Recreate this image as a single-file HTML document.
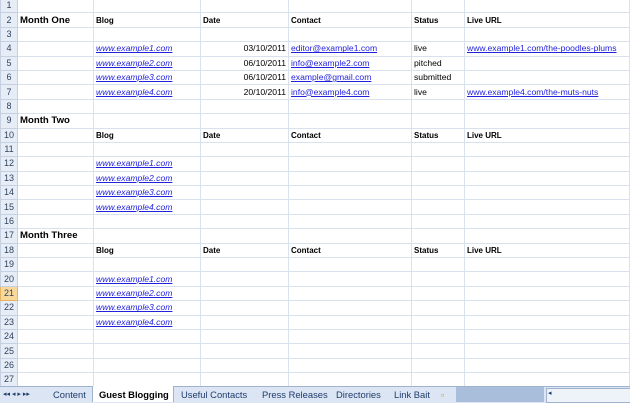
<!DOCTYPE html>
<html><head><style>
body{margin:0;width:630px;height:402px;overflow:hidden;background:#fff;font-family:"Liberation Sans",sans-serif;position:relative}
table{position:absolute;top:-2px;left:0;border-collapse:collapse;table-layout:fixed;width:630px}
td{height:13.4px;border:1px solid #dae1ee;padding:0 2px;font-size:8.6px;white-space:nowrap;overflow:hidden;line-height:13px;color:#000}
td.h{background:#e6edf7;color:#30445e;text-align:center;border-color:#c5d0e0;font-size:9px;padding:0}
td.sel{background:#f9d99b;border-color:#e9b35f}
.b{font-weight:bold;font-size:8px}
.m{font-weight:bold;font-size:9.6px}
.l{color:#2222dd;text-decoration:underline;font-style:italic}
.u{color:#2222dd;text-decoration:underline}
.r{text-align:right}
#tabs{position:absolute;left:0;top:386px;width:630px;height:16px;background:#dbe5f3;border-top:1px solid #9fb3cf;font-size:9.4px;color:#203c6c}
#tabs span{position:absolute;top:2px}
</style></head><body>
<table>
<colgroup><col style="width:17px"><col style="width:76px"><col style="width:107px"><col style="width:88px"><col style="width:123px"><col style="width:53px"><col></colgroup>
<tr><td class="h">1</td><td></td><td></td><td></td><td></td><td></td><td></td></tr>
<tr><td class="h">2</td><td class="m">Month One</td><td class="b">Blog</td><td class="b">Date</td><td class="b">Contact</td><td class="b">Status</td><td class="b">Live URL</td></tr>
<tr><td class="h">3</td><td></td><td></td><td></td><td></td><td></td><td></td></tr>
<tr><td class="h">4</td><td></td><td class="l">www.example1.com</td><td class="r">03/10/2011</td><td class="u">editor@example1.com</td><td>live</td><td class="u">www.example1.com/the-poodles-plums</td></tr>
<tr><td class="h">5</td><td></td><td class="l">www.example2.com</td><td class="r">06/10/2011</td><td class="u">info@example2.com</td><td>pitched</td><td></td></tr>
<tr><td class="h">6</td><td></td><td class="l">www.example3.com</td><td class="r">06/10/2011</td><td class="u">example@gmail.com</td><td>submitted</td><td></td></tr>
<tr><td class="h">7</td><td></td><td class="l">www.example4.com</td><td class="r">20/10/2011</td><td class="u">info@example4.com</td><td>live</td><td class="u">www.example4.com/the-muts-nuts</td></tr>
<tr><td class="h">8</td><td></td><td></td><td></td><td></td><td></td><td></td></tr>
<tr><td class="h">9</td><td class="m">Month Two</td><td></td><td></td><td></td><td></td><td></td></tr>
<tr><td class="h">10</td><td></td><td class="b">Blog</td><td class="b">Date</td><td class="b">Contact</td><td class="b">Status</td><td class="b">Live URL</td></tr>
<tr><td class="h">11</td><td></td><td></td><td></td><td></td><td></td><td></td></tr>
<tr><td class="h">12</td><td></td><td class="l">www.example1.com</td><td></td><td></td><td></td><td></td></tr>
<tr><td class="h">13</td><td></td><td class="l">www.example2.com</td><td></td><td></td><td></td><td></td></tr>
<tr><td class="h">14</td><td></td><td class="l">www.example3.com</td><td></td><td></td><td></td><td></td></tr>
<tr><td class="h">15</td><td></td><td class="l">www.example4.com</td><td></td><td></td><td></td><td></td></tr>
<tr><td class="h">16</td><td></td><td></td><td></td><td></td><td></td><td></td></tr>
<tr><td class="h">17</td><td class="m">Month Three</td><td></td><td></td><td></td><td></td><td></td></tr>
<tr><td class="h">18</td><td></td><td class="b">Blog</td><td class="b">Date</td><td class="b">Contact</td><td class="b">Status</td><td class="b">Live URL</td></tr>
<tr><td class="h">19</td><td></td><td></td><td></td><td></td><td></td><td></td></tr>
<tr><td class="h">20</td><td></td><td class="l">www.example1.com</td><td></td><td></td><td></td><td></td></tr>
<tr><td class="h sel">21</td><td></td><td class="l">www.example2.com</td><td></td><td></td><td></td><td></td></tr>
<tr><td class="h">22</td><td></td><td class="l">www.example3.com</td><td></td><td></td><td></td><td></td></tr>
<tr><td class="h">23</td><td></td><td class="l">www.example4.com</td><td></td><td></td><td></td><td></td></tr>
<tr><td class="h">24</td><td></td><td></td><td></td><td></td><td></td><td></td></tr>
<tr><td class="h">25</td><td></td><td></td><td></td><td></td><td></td><td></td></tr>
<tr><td class="h">26</td><td></td><td></td><td></td><td></td><td></td><td></td></tr>
<tr><td class="h">27</td><td></td><td></td><td></td><td></td><td></td><td></td></tr>
<tr><td class="h">28</td><td></td><td></td><td></td><td></td><td></td><td></td></tr>
</table>
<div id="tabs">
<span style="left:3px;font-size:7px;top:3px">◂◂ ◂ ▸ ▸▸</span>
<div style="position:absolute;left:45px;top:0;width:108px;height:15px;border-right:1px solid #9fb3cf"></div>
<span style="left:53px">Content</span>
<div style="position:absolute;left:92px;top:-1px;width:80px;height:16px;background:#fff;border-left:1px solid #9fb3cf;border-right:1px solid #9fb3cf"></div>
<span style="left:99px;font-weight:bold;color:#000">Guest Blogging</span>
<span style="left:181px">Useful Contacts</span>
<span style="left:262px">Press Releases</span>
<span style="left:336px">Directories</span>
<span style="left:394px">Link Bait</span>
<span style="left:441px;color:#c9a020">▫</span>
<div style="position:absolute;left:456px;top:0;width:88px;height:15px;background:#a9bedb"></div>
<div style="position:absolute;left:546px;top:1px;width:84px;height:13px;background:#eef3fa;border:1px solid #9fb3cf"></div>
<span style="left:548px;font-size:7px">◂</span>
</div>
</body></html>
